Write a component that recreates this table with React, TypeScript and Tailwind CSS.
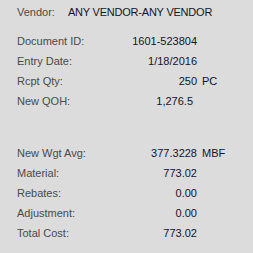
import React from "react";

type Row = { label: string; value: string; unit?: string; pad?: string };

const top: Row[] = [
  { label: "Document ID:", value: "1601-523804" },
  { label: "Entry Date:", value: "1/18/2016" },
  { label: "Rcpt Qty:", value: "250", unit: "PC" },
  { label: "New QOH:", value: "1,276.5", pad: "pr-[4px]" },
];

const bottom: Row[] = [
  { label: "New Wgt Avg:", value: "377.3228", unit: "MBF" },
  { label: "Material:", value: "773.02" },
  { label: "Rebates:", value: "0.00" },
  { label: "Adjustment:", value: "0.00" },
  { label: "Total Cost:", value: "773.02" },
];

function Line({ r }: { r: Row }) {
  return (
    <div className="flex h-[20px] items-center leading-[20px]">
      <span className="w-[100px] text-[#4a4a4a]">{r.label}</span>
      <span className={`w-[80px] text-right text-[#14142a] ${r.pad ?? ""}`}>{r.value}</span>
      {r.unit && <span className="ml-[5px] text-[#14142a]">{r.unit}</span>}
    </div>
  );
}

export default function App() {
  return (
    <div
      className="h-[253px] w-[253px] bg-[#dcdcdc] pl-[17px] pt-[2px] text-[11px]"
      style={{ fontFamily: '"Liberation Sans", Arial, sans-serif' }}
    >
      <div className="flex h-[20px] items-center leading-[20px]">
        <span className="w-[51px] text-[#4a4a4a]">Vendor:</span>
        <span className="tracking-[-0.22px] text-[#14142a]">ANY VENDOR-ANY VENDOR</span>
      </div>
      <div className="mt-[9px]">
        {top.map((r) => (
          <Line key={r.label} r={r} />
        ))}
      </div>
      <div className="mt-[32px]">
        {bottom.map((r) => (
          <Line key={r.label} r={r} />
        ))}
      </div>
    </div>
  );
}
